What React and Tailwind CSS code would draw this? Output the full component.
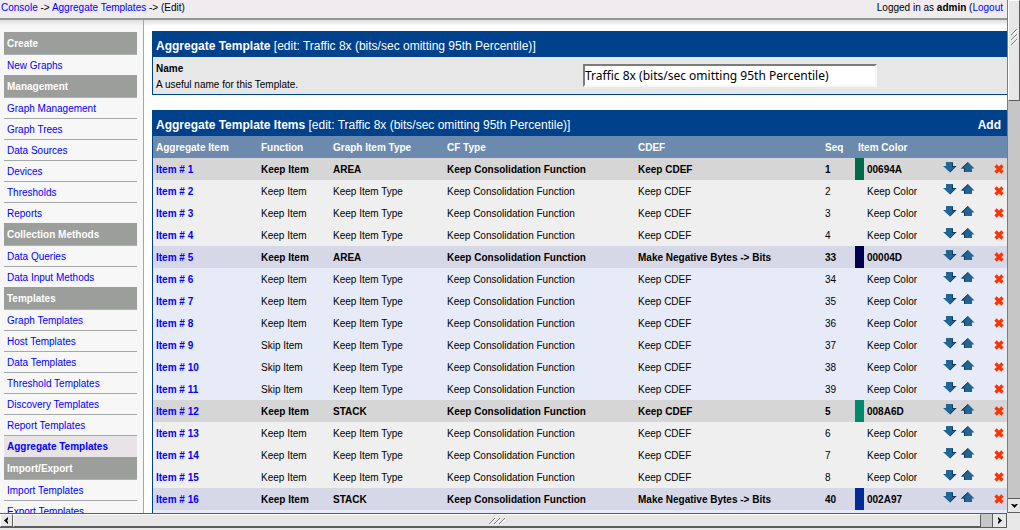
import { useState } from "react";

const TEMPLATE_NAME = "Traffic 8x (bits/sec omitting 95th Percentile)";

const menu = [
  { title: "Create", items: ["New Graphs"] },
  {
    title: "Management",
    items: [
      "Graph Management",
      "Graph Trees",
      "Data Sources",
      "Devices",
      "Thresholds",
      "Reports",
    ],
  },
  { title: "Collection Methods", items: ["Data Queries", "Data Input Methods"] },
  {
    title: "Templates",
    items: [
      "Graph Templates",
      "Host Templates",
      "Data Templates",
      "Threshold Templates",
      "Discovery Templates",
      "Report Templates",
      "Aggregate Templates",
    ],
  },
  { title: "Import/Export", items: ["Import Templates", "Export Templates"] },
];

const keep = (id, seq, tone, func = "Keep Item") => ({
  id,
  func,
  type: "Keep Item Type",
  cdef: "Keep CDEF",
  seq,
  tone,
});

const rows = [
  { id: 1, func: "Keep Item", type: "AREA", cdef: "Keep CDEF", seq: 1, color: "00694A", tone: "grayHead" },
  keep(2, 2, "gray"),
  keep(3, 3, "gray"),
  keep(4, 4, "gray"),
  { id: 5, func: "Keep Item", type: "AREA", cdef: "Make Negative Bytes -> Bits", seq: 33, color: "00004D", tone: "blueHead" },
  keep(6, 34, "blue"),
  keep(7, 35, "blue"),
  keep(8, 36, "blue"),
  keep(9, 37, "blue", "Skip Item"),
  keep(10, 38, "blue", "Skip Item"),
  keep(11, 39, "blue", "Skip Item"),
  { id: 12, func: "Keep Item", type: "STACK", cdef: "Keep CDEF", seq: 5, color: "008A6D", tone: "grayHead" },
  keep(13, 6, "gray"),
  keep(14, 7, "gray"),
  keep(15, 8, "gray"),
  { id: 16, func: "Keep Item", type: "STACK", cdef: "Make Negative Bytes -> Bits", seq: 40, color: "002A97", tone: "blueHead" },
];

const tones = {
  grayHead: "bg-[#d6d6d6] font-bold",
  gray: "bg-[#efefef]",
  blueHead: "bg-[#d6d7e7] font-bold",
  blue: "bg-[#e7ebf7]",
};

/* ------------------------------------------------------------------ */
/*  Icons                                                             */
/* ------------------------------------------------------------------ */
function ArrowDown() {
  return (
    <svg width="14" height="11" viewBox="0 0 14 11">
      <path d="M3 0h7v4h3.5L7 10.5 0 4h3z" fill="#216594" />
      <path d="M9 1h1v3h3.5L7 10.5V9.5L11.5 5H9z" fill="#103c5a" />
    </svg>
  );
}

function ArrowUp() {
  return (
    <svg width="14" height="11" viewBox="0 0 14 11">
      <path d="M7 0l6.5 6.5H11V10H3V6.5H0z" fill="#216594" />
      <path d="M7 0v1L2 6h2v4H3V6.5H0z" fill="#103c5a" />
    </svg>
  );
}

function Cross() {
  return (
    <svg width="10" height="10" viewBox="0 0 10 10">
      <path d="M1.5 1.5l7 7M8.5 1.5l-7 7" stroke="#ff3300" strokeWidth="3.2" />
    </svg>
  );
}

function HorizontalGrip() {
  return (
    <svg width="18" height="8" viewBox="0 0 18 8">
      <path d="M2 8l6-6M7 8l6-6M12 8l6-6" stroke="#fff" fill="none" />
      <path d="M1 7l6-6M6 7l6-6M11 7l6-6" stroke="#848684" fill="none" />
    </svg>
  );
}

function VerticalGrip() {
  return (
    <svg width="8" height="18" viewBox="0 0 8 18">
      <path d="M2 8l6-6M2 13l6-6M2 18l6-6" stroke="#fff" fill="none" />
      <path d="M1 7l6-6M1 12l6-6M1 17l6-6" stroke="#848684" fill="none" />
    </svg>
  );
}

/* ------------------------------------------------------------------ */
/*  Page parts                                                        */
/* ------------------------------------------------------------------ */
function TopBar() {
  return (
    <header className="flex h-5 shrink-0 justify-between border-b-2 border-[#949694] bg-[#efebef] pl-px leading-4 whitespace-nowrap">
      <nav>
        <a href="#console" className="text-[#0000ff]">Console</a>
        {" -> "}
        <a href="#aggregate" className="text-[#0000ff]">Aggregate Templates</a>
        {" -> (Edit)"}
      </nav>
      <div className="pr-1">
        Logged in as <b>admin</b> (<a href="#logout" className="text-[#0000ff]">Logout</a>
      </div>
    </header>
  );
}

function Sidebar() {
  return (
    <aside className="w-36 shrink-0 border-r border-[#a5a6a5] bg-[#f7f7f7] bg-linear-to-b from-[#dedede] to-[#f7f7f7] to-[6px] pt-3 pr-1.5 pl-1">
      {menu.map((group) => (
        <section key={group.title}>
          <h2 className="h-[23px] border-b border-[#adb2b0] bg-[#9c9e9b] pl-[3px] leading-6 font-bold text-white">
            {group.title}
          </h2>
          <ul>
            {group.items.map((item) => (
              <li
                key={item}
                className={`pl-[3px] leading-[22px] whitespace-nowrap ${
                  item === "Aggregate Templates"
                    ? "h-[21px] bg-[#e7e3e7] font-bold"
                    : "h-[21px] border-b border-[#a5aaa8] last:h-5 last:border-b-0"
                }`}
              >
                <a href="#menu" className="text-[#0000ff]">{item}</a>
              </li>
            ))}
          </ul>
        </section>
      ))}
    </aside>
  );
}

function PanelTitle({ title, children }) {
  return (
    <div className="flex h-[26px] items-center justify-between bg-[#00418c] pt-1 pr-1.5 pl-1 text-[12px] text-white">
      <h1>
        <b>{title}</b> [edit: {TEMPLATE_NAME}]
      </h1>
      {children}
    </div>
  );
}

function NamePanel() {
  const [name, setName] = useState(TEMPLATE_NAME);

  return (
    <section className="border-b border-[#00418c]">
      <PanelTitle title="Aggregate Template" />
      <div className="flex h-[37px] items-center border-l border-[#00418c] bg-[#e7e7e7]">
        <label htmlFor="name" className="w-1/2 pt-0.5 pl-[3px] leading-4">
          <b className="block">Name</b>
          A useful name for this Template.
        </label>
        <input
          id="name"
          value={name}
          onChange={(e) => setName(e.target.value)}
          className="ml-[3px] h-[23px] w-[294px] border-2 border-t-[#7b7d7b] border-r-[#f7f7f7] border-b-[#f7f7f7] border-l-[#7b7d7b] bg-white font-['Noto_Sans',sans-serif] text-[12px] outline-none"
        />
      </div>
    </section>
  );
}

function ItemsPanel() {
  return (
    <section className="mt-[15px]">
      <PanelTitle title="Aggregate Template Items">
        <a href="#add" className="font-bold">Add</a>
      </PanelTitle>
      <table className="w-full table-fixed border-separate border-spacing-0 border-l border-[#00418c] text-left whitespace-nowrap [&_td]:p-0 [&_td]:pl-[3px] [&_th]:p-0 [&_th]:pl-[3px]">
        <colgroup>
          <col className="w-[105px]" />
          <col className="w-[72px]" />
          <col className="w-[114px]" />
          <col className="w-[191px]" />
          <col />
          <col className="w-[33px]" />
          <col className="w-[85px]" />
          <col className="w-[51px]" />
          <col className="w-[16px]" />
        </colgroup>
        <thead>
          <tr className="h-[22px] bg-[#6b8aad] text-white">
            <th>Aggregate Item</th>
            <th>Function</th>
            <th>Graph Item Type</th>
            <th>CF Type</th>
            <th>CDEF</th>
            <th>Seq</th>
            <th>Item Color</th>
            <th aria-label="Move" />
            <th aria-label="Delete" />
          </tr>
        </thead>
        <tbody>
          {rows.map((row) => (
            <tr key={row.id} className={`h-[22px] ${tones[row.tone]}`}>
              <td>
                <a href="#item" className="font-bold text-[#0000ff]">Item # {row.id}</a>
              </td>
              <td>{row.func}</td>
              <td>{row.type}</td>
              <td>Keep Consolidation Function</td>
              <td>{row.cdef}</td>
              <td>{row.seq}</td>
              <td className="pl-0!">
                <div className="flex items-center gap-[3px]">
                  <span
                    className="h-[22px] w-[9px]"
                    style={{ background: row.color ? `#${row.color}` : "transparent" }}
                  />
                  {row.color || "Keep Color"}
                </div>
              </td>
              <td>
                <div className="flex gap-1 pb-1">
                  <button aria-label="Move down"><ArrowDown /></button>
                  <button aria-label="Move up"><ArrowUp /></button>
                </div>
              </td>
              <td>
                <button aria-label="Delete" className="block"><Cross /></button>
              </td>
            </tr>
          ))}
          <tr className="h-[22px] bg-[#e7ebf7]">
            <td colSpan={9} />
          </tr>
        </tbody>
      </table>
    </section>
  );
}

/* ------------------------------------------------------------------ */
/*  Scrollbars                                                        */
/* ------------------------------------------------------------------ */
const raised =
  "flex items-center justify-center border border-t-white border-l-white border-r-[#5a5d5a] border-b-[#5a5d5a] bg-[#e7e7e7]";

function VerticalScrollbar() {
  return (
    <div className="flex w-[13px] shrink-0 flex-col justify-between border-l border-[#7b7d7b] bg-[#c6c6c6]">
      <div className={`h-[101px] pb-7 ${raised}`}>
        <VerticalGrip />
      </div>
      <button
        aria-label="Scroll down"
        className="flex h-[15px] items-center justify-center border-y border-[#5a5d5a] bg-[#e7e7e7]"
      >
        <svg width="7" height="5" viewBox="0 0 7 5"><path d="M0 1h2l1.5 1L5 1h2L3.5 5z" /></svg>
      </button>
    </div>
  );
}

function HorizontalScrollbar() {
  return (
    <div className="flex h-[17px] shrink-0 bg-[#e7e7e7]">
      <div className="flex h-[15px] flex-1 border-y border-[#5a5d5a] bg-[#c6c6c6]">
        <button aria-label="Scroll left" className={`w-[13px] ${raised}`}>
          <svg width="5" height="7" viewBox="0 0 5 7"><path d="M4 0v2L3 3.5 4 5v2L0 3.5z" /></svg>
        </button>
        <div className={`mr-[11px] flex-1 ${raised}`}>
          <HorizontalGrip />
        </div>
        <button
          aria-label="Scroll right"
          className="flex w-[15px] items-center justify-center border-x border-[#5a5d5a] bg-[#e7e7e7]"
        >
          <svg width="5" height="7" viewBox="0 0 5 7"><path d="M1 0v2l1 1.5L1 5v2l4-3.5z" /></svg>
        </button>
      </div>
      <div className="w-[13px]" />
    </div>
  );
}

/* ------------------------------------------------------------------ */
/*  App                                                               */
/* ------------------------------------------------------------------ */
export default function App() {
  return (
    <div className="flex h-screen flex-col overflow-hidden bg-white font-['Liberation_Sans',Arial,sans-serif] text-[10px] text-black">
      <div className="flex min-h-0 flex-1">
        <div className="flex min-w-0 flex-1 flex-col overflow-hidden">
          <TopBar />
          <div className="flex min-h-0 flex-1 overflow-hidden">
            <Sidebar />
            <main className="min-w-0 flex-1 bg-linear-to-b from-[#dedede] to-white to-[6px] pt-[11px] pl-2">
              <NamePanel />
              <ItemsPanel />
            </main>
          </div>
        </div>
        <VerticalScrollbar />
      </div>
      <HorizontalScrollbar />
    </div>
  );
}
